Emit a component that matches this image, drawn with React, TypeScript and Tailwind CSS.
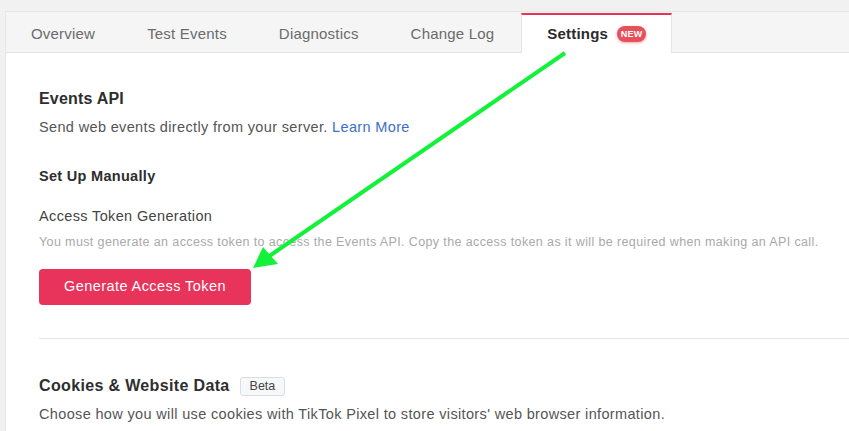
import React from 'react';

const tabs = ['Overview', 'Test Events', 'Diagnostics', 'Change Log'];

/**
 * 設定タブのページ
 */
const App: React.FC = () => {
  return (
    <div
      className="relative w-[849px] h-[431px] overflow-hidden bg-[#f1f1f1] pt-[11px] pl-[5px]"
      style={{ fontFamily: '"Liberation Sans", Arial, sans-serif' }}
    >
      <div className="h-full bg-white border-l border-t border-[#e6e6e6]">
        {/* タブ */}
        <div className="flex items-end h-[41px] bg-[#f5f5f5] border-b border-[#e3e3e3]">
          <div className="flex items-end pl-[25px] gap-[52px] pr-[27px]">
            {tabs.map((tab) => (
              <div key={tab} className="h-[39px] pt-[3px] flex items-center text-[15px] tracking-[0.2px] text-[#6b6b6b]">
                {tab}
              </div>
            ))}
          </div>
          <div className="h-[40px] -mb-px flex items-center gap-[9px] pl-[25px] pr-[25px] bg-white border-t-2 border-t-[#e8325a] border-x border-x-[#e6e6e6] text-[15px] tracking-[0.2px] font-bold text-[#2b2b2b]">
            Settings
            <span className="h-[16px] w-[29px] text-center rounded-full bg-[#e6505a] text-white text-[9px] font-bold leading-[16px] tracking-[0.3px] shadow-[0_1px_3px_rgba(230,80,90,0.5)]">
              NEW
            </span>
          </div>
        </div>

        {/* コンテンツ */}
        <div className="pl-[33px] pt-[36px]">
          <h2 className="text-[16px] font-semibold tracking-[0.2px] text-[#2e2e2e] leading-[20px]">Events API</h2>
          <p className="mt-[9px] text-[14.5px] tracking-[0.35px] text-[#555] leading-[18px]">
            Send web events directly from your server. <span className="text-[#3e6fc7]">Learn More</span>
          </p>

          <h3 className="mt-[31px] text-[14.5px] tracking-[0.3px] font-bold text-[#2e2e2e] leading-[18px]">Set Up Manually</h3>
          <p className="mt-[22px] text-[14.5px] tracking-[0.36px] text-[#444] leading-[18px]">Access Token Generation</p>
          <p className="mt-[9px] text-[12.5px] tracking-[0.38px] text-[#a9a9a9] leading-[16px] whitespace-nowrap">
            You must generate an access token to access the Events API. Copy the access token as it will be required when making an API call.
          </p>
          <button className="mt-[19px] w-[212px] h-[36px] rounded-[4px] bg-[#e8335a] text-white text-[14.5px] tracking-[0.43px]">
            Generate Access Token
          </button>

          <div className="mt-[33px] border-t border-[#e5e5e5]" />

          <div className="mt-[37px] flex items-center gap-[10px]">
            <h2 className="text-[16px] font-semibold tracking-[0.35px] text-[#2e2e2e] leading-[20px]">Cookies &amp; Website Data</h2>
            <span className="h-[19px] px-[9px] rounded-[3px] border border-[#d9dee5] bg-[#f6f8fa] text-[12.5px] text-[#444] leading-[17px]">
              Beta
            </span>
          </div>
          <p className="mt-[9px] text-[14.5px] tracking-[0.35px] text-[#555] leading-[18px]">
            Choose how you will use cookies with TikTok Pixel to store visitors' web browser information.
          </p>
        </div>
      </div>

      {/* 注釈の矢印 */}
      <svg className="absolute left-0 top-0 pointer-events-none" width="849" height="431">
        <line x1="565" y1="53" x2="268" y2="257" stroke="#12f23a" strokeWidth="4" />
        <polygon points="253,268 263,247 278,264" fill="#12f23a" />
      </svg>
    </div>
  );
};

export default App;
